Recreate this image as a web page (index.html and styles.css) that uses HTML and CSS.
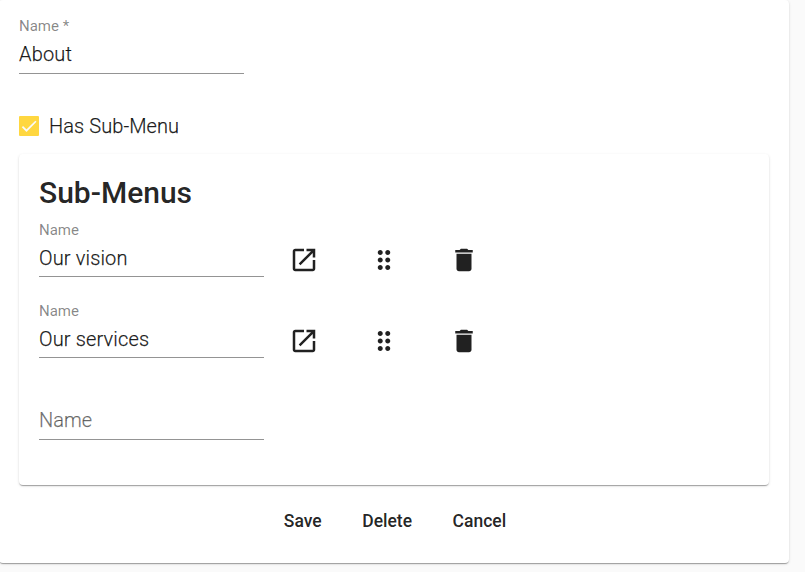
FILE: index.html
```
<!DOCTYPE html>
<html lang="en">
<head>
<meta charset="utf-8">
<title>Menu item</title>
<link rel="stylesheet" href="styles.css">
</head>
<body>
<svg width="0" height="0" class="sprite">
  <symbol id="open" viewBox="0 0 24 24"><path d="M19 19H5V5h7V3H5c-1.11 0-2 .9-2 2v14c0 1.1.89 2 2 2h14c1.1 0 2-.9 2-2v-7h-2v7zM14 3v2h3.590l-9.830 9.830 1.410 1.410L19 6.410V10h2V3h-7z"/></symbol>
  <symbol id="drag" viewBox="0 0 24 24"><path d="M11 18c0 1.100-.9 2-2 2s-2-.9-2-2 .9-2 2-2 2 .9 2 2zm-2-8c-1.100 0-2 .9-2 2s.9 2 2 2 2-.9 2-2-.9-2-2-2zm0-6c-1.100 0-2 .9-2 2s.9 2 2 2 2-.9 2-2-.9-2-2-2zm6 4c1.100 0 2-.9 2-2s-.9-2-2-2-2 .9-2 2 .9 2 2 2zm0 2c-1.100 0-2 .9-2 2s.9 2 2 2 2-.9 2-2-.9-2-2-2zm0 6c-1.100 0-2 .9-2 2s.9 2 2 2 2-.9 2-2-.9-2-2-2z"/></symbol>
  <symbol id="trash" viewBox="0 0 24 24"><path d="M6 19c0 1.100.9 2 2 2h8c1.100 0 2-.9 2-2V7H6v12zM19 4h-3.500l-1-1h-5l-1 1H5v2h14V4z"/></symbol>
</svg>
<main class="card">
  <div class="field"><label class="label">Name *</label><div class="value">About</div></div>
  <div class="check">
    <span class="box"><svg viewBox="0 0 24 24"><path d="M4.100 12.700 9 17.600 20.300 6.300"/></svg></span>
    <span class="caption">Has Sub-Menu</span>
  </div>
  <section class="panel">
    <h2>Sub-Menus</h2>
    <div class="row">
      <div class="field"><label class="label">Name</label><div class="value">Our vision</div></div>
      <div class="icons"><svg><use href="#open"/></svg><svg><use href="#drag"/></svg><svg><use href="#trash"/></svg></div>
    </div>
    <div class="row">
      <div class="field"><label class="label">Name</label><div class="value">Our services</div></div>
      <div class="icons"><svg><use href="#open"/></svg><svg><use href="#drag"/></svg><svg><use href="#trash"/></svg></div>
    </div>
    <div class="row last">
      <div class="field"><div class="value empty">Name</div></div>
    </div>
  </section>
  <div class="actions"><button>Save</button><button>Delete</button><button>Cancel</button></div>
</main>
</body>
</html>
```
FILE: styles.css
```
* { box-sizing: border-box; }
body {
  margin: 0;
  height: 572px;
  overflow: hidden;
  background: #fafafa;
  color: rgba(0, 0, 0, .87);
  font-family: Roboto, sans-serif;
  font-size: 20px;
}
.sprite { display: block; height: 0; }
.card {
  width: 790px;
  height: 563px;
  margin-left: -1px;
  padding: 16px 20px 0;
  background: #fff;
  border-radius: 4px;
}
.card, .panel {
  box-shadow: 0 2px 1px -1px rgba(0, 0, 0, .2), 0 1px 1px 0 rgba(0, 0, 0, .14), 0 1px 3px 0 rgba(0, 0, 0, .12);
}
.field {
  width: 225px;
  height: 58px;
  border-bottom: 1px solid #949494;
}
.row .field { height: 57px; }
.row.last .field { height: 58px; }
.label {
  display: block;
  height: 20px;
  line-height: 20px;
  font-size: 15px;
  font-weight: 400;
  color: rgba(0, 0, 0, .48);
}
.value, .caption { font-weight: 300; letter-spacing: .15px; -webkit-text-stroke: .25px currentColor; }
.value { height: 36px; line-height: 36px; }
.caption { letter-spacing: .08px; }
.empty { padding-top: 20px; color: rgba(0, 0, 0, .54); letter-spacing: .05px; }
.check {
  display: flex;
  align-items: center;
  gap: 10px;
  height: 24px;
  margin-top: 40px;
}
.box { width: 20px; height: 20px; background: #ffd740; border-radius: 1px; }
.box svg { display: block; width: 20px; height: 20px; fill: none; stroke: #fafafa; stroke-width: 2.100; }
.panel {
  width: 750px;
  height: 331px;
  margin-top: 16px;
  padding: 20px 20px 0;
  background: #fff;
  border-radius: 4px;
}
h2 { margin: 0; height: 46px; line-height: 37px; font-size: 30px; font-weight: 500; }
.row { display: flex; height: 81px; }
.icons { display: flex; gap: 50px; margin: 25px 0 0 25px; }
.icons svg { width: 30px; height: 30px; fill: rgba(0, 0, 0, .87); }
.actions { display: flex; justify-content: center; height: 40px; margin-top: 16px; padding-left: 2px; gap: .5px; }
button {
  padding: 0 20px;
  border: 0;
  background: none;
  color: rgba(0, 0, 0, .87);
  font: 500 17.500px/40px Roboto, sans-serif;
}
```
